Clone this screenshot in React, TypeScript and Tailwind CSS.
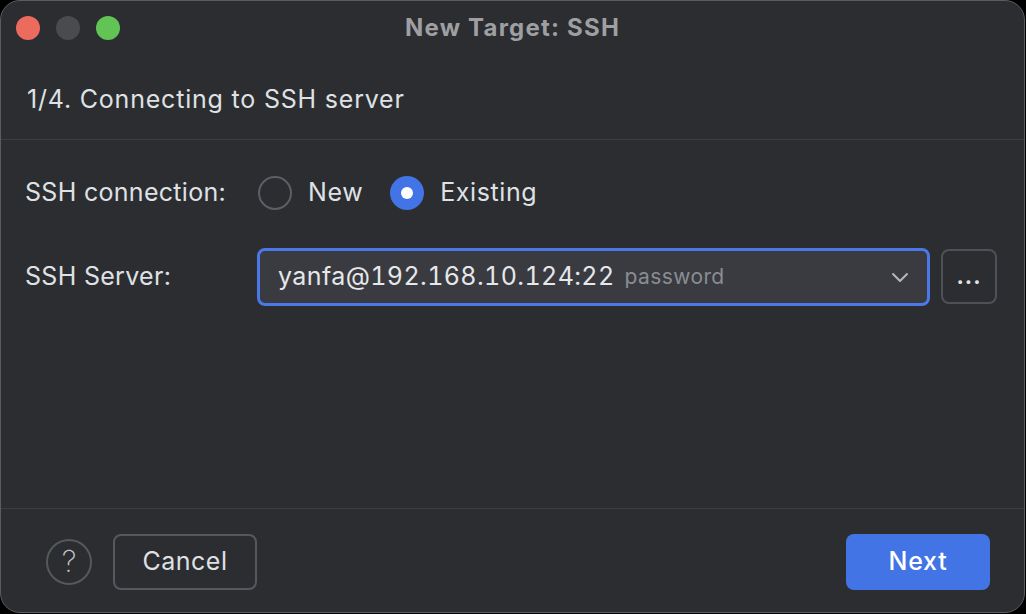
import React from "react";

const font = { fontFamily: "Inter, 'Noto Sans', sans-serif" };

const Radio = ({ checked, label }: { checked?: boolean; label: string }) => (
  <label className="flex items-center gap-4">
    {checked ? (
      <span className="flex h-[34px] w-[34px] items-center justify-center rounded-full bg-[#4374e6]">
        <span className="h-[12px] w-[12px] rounded-full bg-white" />
      </span>
    ) : (
      <span className="h-[34px] w-[34px] rounded-full border-2 border-[#5c5f65]" />
    )}
    <span className="text-[25px] tracking-[0.6px] text-[#dfe1e5]">{label}</span>
  </label>
);

export default function App() {
  return (
    <div className="h-[614px] w-[1026px] bg-black" style={font}>
      <div className="flex h-[613px] w-[1025px] flex-col overflow-hidden rounded-[20px] border border-[#5a5c61] bg-[#2b2d30]">
        {/* title bar */}
        <div className="flex h-[54px] items-center">
          <div className="flex w-[120px] items-center gap-4 pl-[15px]">
            <span className="h-[24px] w-[24px] rounded-full bg-[#ed6a5e]" />
            <span className="h-[24px] w-[24px] rounded-full bg-[#4a4b4e]" />
            <span className="h-[24px] w-[24px] rounded-full bg-[#61c454]" />
          </div>
          <div className="flex-1 text-center text-[24px] font-bold tracking-[1.2px] text-[#9d9fa3]">
            New Target: SSH
          </div>
          <div className="w-[120px]" />
        </div>

        {/* header */}
        <div className="flex h-[84px] items-center px-[26px] pt-[6px] text-[25px] tracking-[0.8px] text-[#dfe1e5]">
          1/4. Connecting to SSH server
        </div>
        <div className="h-px bg-[#3c3e43]" />

        {/* form */}
        <div className="flex flex-1 flex-col px-[24px] pt-[34px]">
          <div className="flex items-center">
            <span className="w-[233px] text-[25px] tracking-[0.3px] text-[#dfe1e5]">SSH connection:</span>
            <div className="flex items-center gap-[27px]">
              <Radio label="New" />
              <Radio label="Existing" checked />
            </div>
          </div>

          <div className="mt-[36px] flex items-center">
            <span className="w-[232px] text-[25px] tracking-[0.3px] text-[#dfe1e5]">SSH Server:</span>
            <div className="flex h-[58px] w-[673px] items-center rounded-[8px] border-[3px] border-[#4a78e6] bg-[#393b40] pl-[18px] pr-[16px]">
              <span className="text-[25px] tabular-nums tracking-[0.4px] text-[#e6e7ea]">yanfa@192.168.10.124:22</span>
              <span className="ml-[10px] text-[21px] tracking-[0.4px] text-[#8a8d92]">password</span>
              <svg className="ml-auto" width="22" height="22" viewBox="0 0 22 22" fill="none">
                <path d="M4 8l7 7 7-7" stroke="#b4b7bc" strokeWidth="2" strokeLinecap="round" strokeLinejoin="round" />
              </svg>
            </div>
            <button className="ml-[11px] flex h-[55px] w-[56px] items-center justify-center rounded-[8px] border-2 border-[#4e5157] text-[22px] font-bold tracking-[1px] text-[#dfe1e5]">
              ...
            </button>
          </div>
        </div>

        {/* footer */}
        <div className="h-px bg-[#3c3e43]" />
        <div className="flex h-[103px] items-center pl-[45px] pr-[34px] pt-[2px]">
          <button className="flex h-[46px] w-[46px] items-center justify-center rounded-full border-2 border-[#55585d] text-[30px] font-extralight text-[#c3c5c9]">
            ?
          </button>
          <button className="ml-[21px] h-[56px] w-[144px] rounded-[8px] border-2 border-[#55585d] text-[25px] tracking-[0.5px] text-[#dfe1e5]">
            Cancel
          </button>
          <button className="ml-auto h-[56px] w-[144px] rounded-[8px] bg-[#4374e6] text-[25px] font-medium tracking-[0.8px] text-white">
            Next
          </button>
        </div>
      </div>
    </div>
  );
}
